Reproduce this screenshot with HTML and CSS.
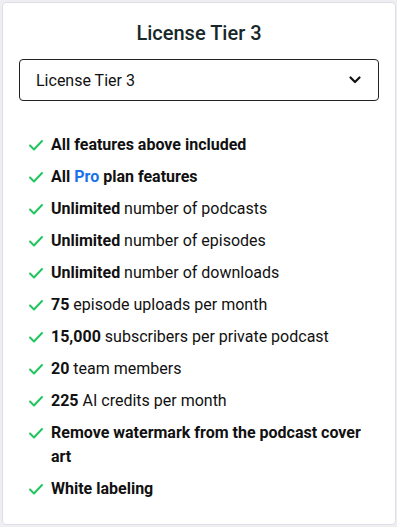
FILE: index.html
```html
<!DOCTYPE html>
<html lang="en">
<head>
<meta charset="UTF-8">
<meta name="viewport" content="width=device-width, initial-scale=1.0">
<title>License Tier 3</title>
<link rel="stylesheet" href="styles.css">
</head>
<body>
<div class="card">
  <h2 class="title">License Tier 3</h2>

  <div class="select">
    <span>License Tier 3</span>
    <svg class="chevron" width="14" height="14" viewBox="0 0 14 14"><path d="M2.5 4.5 L7 9 L11.5 4.5" fill="none" stroke="#111" stroke-width="2.2" stroke-linecap="round" stroke-linejoin="round"/></svg>
  </div>

  <ul class="features">
    <li><svg class="check" viewBox="0 0 16 16"><path d="M2 8.5 L6 12.5 L14 4" fill="none" stroke="#22c55e" stroke-width="2" stroke-linecap="round" stroke-linejoin="round"/></svg><span><b>All features above included</b></span></li>
    <li><svg class="check" viewBox="0 0 16 16"><path d="M2 8.5 L6 12.5 L14 4" fill="none" stroke="#22c55e" stroke-width="2" stroke-linecap="round" stroke-linejoin="round"/></svg><span><b>All <span class="pro">Pro</span> plan features</b></span></li>
    <li><svg class="check" viewBox="0 0 16 16"><path d="M2 8.5 L6 12.5 L14 4" fill="none" stroke="#22c55e" stroke-width="2" stroke-linecap="round" stroke-linejoin="round"/></svg><span><b>Unlimited</b> number of podcasts</span></li>
    <li><svg class="check" viewBox="0 0 16 16"><path d="M2 8.5 L6 12.5 L14 4" fill="none" stroke="#22c55e" stroke-width="2" stroke-linecap="round" stroke-linejoin="round"/></svg><span><b>Unlimited</b> number of episodes</span></li>
    <li><svg class="check" viewBox="0 0 16 16"><path d="M2 8.5 L6 12.5 L14 4" fill="none" stroke="#22c55e" stroke-width="2" stroke-linecap="round" stroke-linejoin="round"/></svg><span><b>Unlimited</b> number of downloads</span></li>
    <li><svg class="check" viewBox="0 0 16 16"><path d="M2 8.5 L6 12.5 L14 4" fill="none" stroke="#22c55e" stroke-width="2" stroke-linecap="round" stroke-linejoin="round"/></svg><span><b>75</b> episode uploads per month</span></li>
    <li><svg class="check" viewBox="0 0 16 16"><path d="M2 8.5 L6 12.5 L14 4" fill="none" stroke="#22c55e" stroke-width="2" stroke-linecap="round" stroke-linejoin="round"/></svg><span><b>15,000</b> subscribers per private podcast</span></li>
    <li><svg class="check" viewBox="0 0 16 16"><path d="M2 8.5 L6 12.5 L14 4" fill="none" stroke="#22c55e" stroke-width="2" stroke-linecap="round" stroke-linejoin="round"/></svg><span><b>20</b> team members</span></li>
    <li><svg class="check" viewBox="0 0 16 16"><path d="M2 8.5 L6 12.5 L14 4" fill="none" stroke="#22c55e" stroke-width="2" stroke-linecap="round" stroke-linejoin="round"/></svg><span><b>225</b> AI credits per month</span></li>
    <li><svg class="check" viewBox="0 0 16 16"><path d="M2 8.5 L6 12.5 L14 4" fill="none" stroke="#22c55e" stroke-width="2" stroke-linecap="round" stroke-linejoin="round"/></svg><span><b>Remove watermark from the podcast cover art</b></span></li>
    <li><svg class="check" viewBox="0 0 16 16"><path d="M2 8.5 L6 12.5 L14 4" fill="none" stroke="#22c55e" stroke-width="2" stroke-linecap="round" stroke-linejoin="round"/></svg><span><b>White labeling</b></span></li>
  </ul>
</div>
</body>
</html>
```

FILE: styles.css
```css
body {
  margin: 0;
  padding: 2px 1px 2px 2px;
  background-color: #eeeef3;
  font-family: Roboto, "Liberation Sans", sans-serif;
  color: #111;
}

.card {
  background-color: #fff;
  border: 1px solid #dedee6;
  border-radius: 4px;
  height: 523px;
  box-sizing: border-box;
  padding: 18px 16px 0 16px;
}

.title {
  margin: 0;
  text-align: center;
  font-size: 20px;
  font-weight: 500;
  line-height: 24px;
  color: #17282a;
}

.select {
  margin-top: 14px;
  height: 42px;
  box-sizing: border-box;
  border: 1px solid #222;
  border-radius: 4px;
  display: flex;
  align-items: center;
  justify-content: space-between;
  padding: 0 16px 0 16px;
  font-size: 16px;
}

.features {
  list-style: none;
  margin: 32px 0 0 0;
  padding: 0 0 0 9px;
}

.features li {
  display: flex;
  align-items: flex-start;
  font-size: 16px;
  line-height: 24px;
  margin-bottom: 8px;
  padding-right: 10px;
}

.check {
  width: 16px;
  height: 16px;
  flex: none;
  margin: 4px 7px 0 0;
}

.features b {
  font-weight: 700;
}

.pro {
  color: #1a73e8;
}
```
